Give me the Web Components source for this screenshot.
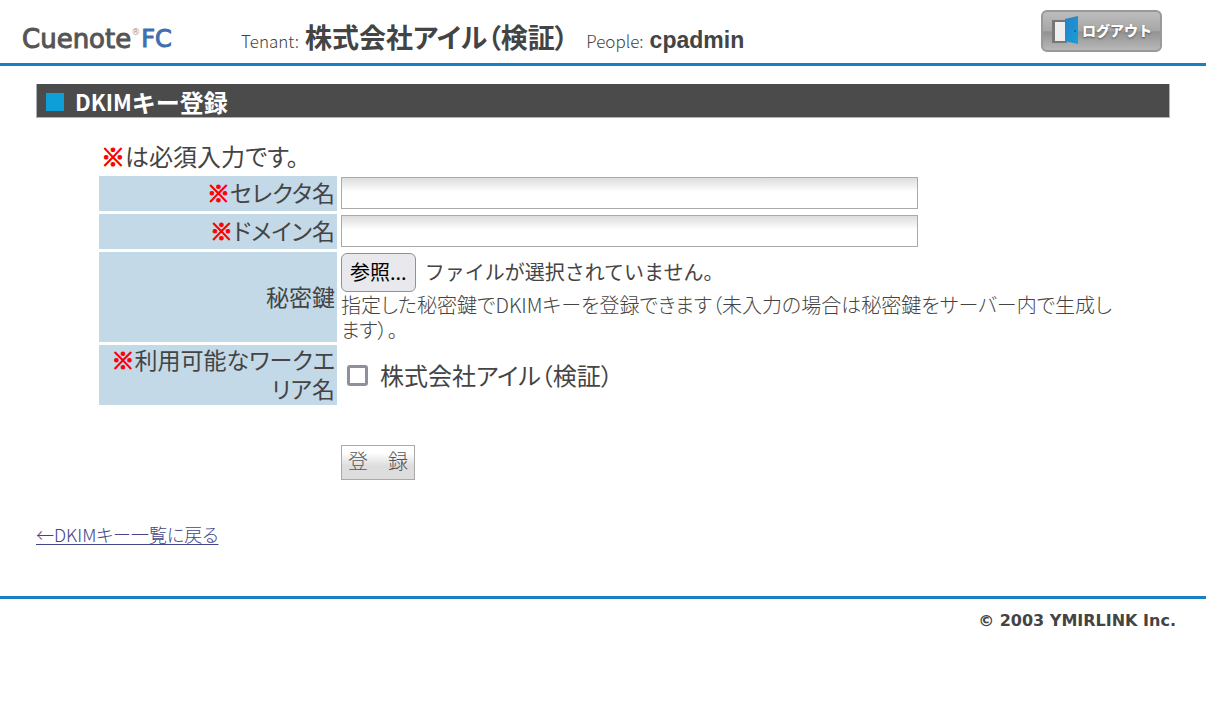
<!DOCTYPE html>
<html lang="ja">
<head>
<meta charset="utf-8">
<meta name="viewport" content="width=device-width, initial-scale=1">
<title>DKIMキー登録 - Cuenote FC</title>
<style>
  :root {
    --line: #1a80c2;
    --fg: #444;
    --label-bg: #c3d9e7;
    --field-border: #aaa;
    --required: #f00;
  }
  body {
    margin: 0;
    background: #fff;
    color: var(--fg);
    font-family: "Noto Sans CJK JP", sans-serif;
  }
</style>
</head>
<body>
<app-header tenant="株式会社アイル（検証）" people="cpadmin">
  <logout-button>ログアウト</logout-button>
</app-header>
<app-page>
  <section-title><span>DKIM</span>キー登録</section-title>
  <dkim-form></dkim-form>
  <back-link href="#list">←DKIMキー一覧に戻る</back-link>
</app-page>
<app-footer>© 2003 YMIRLINK Inc.</app-footer>

<script>
(function () {
  // small helper: attach an open root and fill it
  function render(el, html) {
    el.attachShadow({ mode: 'open' }).innerHTML = html;
  }

  class AppHeader extends HTMLElement {
    connectedCallback() {
      if (this.shadowRoot) return;
      render(this, `
        <style>
          :host { display: block; border-bottom: 3px solid var(--line); }
          header { display: flex; height: 63px; padding: 0 44px 0 22px; box-sizing: border-box; }
          .logo {
            display: flex; width: 219px; padding-top: 21px; line-height: 36px;
            font-family: "DejaVu Sans", sans-serif; font-size: 26px;
            color: #555; text-decoration: none; -webkit-text-stroke: 1px currentColor;
          }
          .logo sup { font-size: 9px; line-height: 22px; color: #999; -webkit-text-stroke: 0; }
          .logo b { margin-left: 1px; font-size: 24px; font-weight: 400; color: #3f6fb0; }
          .who {
            flex: 1; display: flex; align-items: baseline; gap: 6px; padding-top: 18px;
            font-size: 17px; font-weight: 300; line-height: 38px; white-space: nowrap;
            font-feature-settings: "palt";
          }
          .who strong { font-size: 27px; font-weight: 700; }
          .who .people { margin-left: 12px; }
          .who .id { font: 700 23px/38px "Liberation Sans", sans-serif; }
          ::slotted(*) { margin-top: 10px; }
        </style>
        <header>
          <a class="logo" href="#top"><span>Cuenote</span><sup>®</sup><b>FC</b></a>
          <div class="who">
            <span>Tenant:</span><strong class="tenant"></strong>
            <span class="people">People:</span><strong class="id"></strong>
          </div>
          <slot></slot>
        </header>
      `);
      this.shadowRoot.querySelector('.tenant').textContent = this.getAttribute('tenant') || '';
      this.shadowRoot.querySelector('.id').textContent = this.getAttribute('people') || '';
    }
  }

  class LogoutButton extends HTMLElement {
    connectedCallback() {
      if (this.shadowRoot) return;
      render(this, `
        <style>
          :host { display: block; flex: none; }
          button {
            display: flex; align-items: center; gap: 3px;
            width: 121px; height: 42px; padding: 0 0 3px 8px; box-sizing: border-box;
            border: 2px solid #999; border-radius: 6px; cursor: pointer;
            background: linear-gradient(#bdbdbd, #a6a6a6 50%, #929292 52%, #b8b8b8);
            color: #fff; font: 900 14px/20px "Noto Sans CJK JP", sans-serif;
            text-shadow: 0 1px 2px #555;
          }
          svg { flex: none; display: block; }
        </style>
        <button type="button">
          <svg width="28" height="30" viewBox="0 0 28 30" aria-hidden="true">
            <defs>
              <linearGradient id="door" x1="0" y1="0" x2="1" y2="1">
                <stop offset="0" stop-color="#2a7fc4"/><stop offset="1" stop-color="#14a0dc"/>
              </linearGradient>
            </defs>
            <path d="M1 5h15v23H1z" fill="#777"/>
            <path d="M4 7h12v19H4z" fill="#eee"/>
            <path d="M14 4L27 1v28l-13-3z" fill="url(#door)"/>
            <circle cx="24" cy="16" r="1" fill="#0d5f96"/>
          </svg>
          <slot></slot>
        </button>
      `);
    }
  }

  class AppPage extends HTMLElement {
    connectedCallback() {
      if (this.shadowRoot) return;
      render(this, `
        <style>
          :host { display: block; padding: 18px 36px 50px; }
        </style>
        <main><slot></slot></main>
      `);
    }
  }

  class SectionTitle extends HTMLElement {
    connectedCallback() {
      if (this.shadowRoot) return;
      render(this, `
        <style>
          :host { display: block; }
          h1 {
            display: flex; align-items: center; margin: 0; padding: 2px 9px 0; height: 34px;
            box-sizing: border-box; border: solid #b0b0bc; border-width: 0 1px 1px;
            background: #4b4b4b; color: #fff; font-size: 24px; font-weight: 700; line-height: 31px;
          }
          h1::before { content: ""; width: 18px; height: 18px; margin-right: 11px; background: #0e9fd8; }
          ::slotted(span) { font-size: 22px; }
        </style>
        <h1><slot></slot></h1>
      `);
    }
  }

  // label cell on the left, field on the right
  class FormRow extends HTMLElement {
    connectedCallback() {
      if (this.shadowRoot) return;
      render(this, `
        <style>
          :host { display: grid; grid-template-columns: 238px 1fr; column-gap: 4px; min-height: 35px; }
          .label {
            display: flex; align-items: center; justify-content: flex-end;
            padding: 0 2px 2px; background: var(--label-bg);
            font-size: 23px; line-height: 29px; text-align: right;
          }
          .field { align-self: center; min-width: 0; }
        </style>
        <div class="label"><slot name="label"></slot></div>
        <div class="field"><slot></slot></div>
      `);
    }
  }

  class FilePicker extends HTMLElement {
    connectedCallback() {
      if (this.shadowRoot) return;
      render(this, `
        <style>
          :host { display: flex; align-items: center; gap: 9px; padding-top: 1px; font-size: 20px; line-height: 30px; }
          button {
            height: 39px; padding: 0 8px 2px; border: 1px solid #8f8f9d; border-radius: 6px;
            background: #e9e9ed; color: #000; font: inherit;
          }
          span { padding-bottom: 2px; }
          input { display: none; }
        </style>
        <button type="button">参照...</button>
        <span>ファイルが選択されていません。</span>
        <input type="file" aria-label="秘密鍵">
      `);
      const input = this.shadowRoot.querySelector('input');
      const name = this.shadowRoot.querySelector('span');
      this.shadowRoot.querySelector('button').addEventListener('click', () => input.click());
      input.addEventListener('change', () => {
        if (input.files.length) name.textContent = input.files[0].name;
      });
    }
  }

  class DkimForm extends HTMLElement {
    connectedCallback() {
      if (this.shadowRoot) return;
      render(this, `
        <style>
          :host { display: block; padding: 23px 54px 0 63px; }
          .note { margin: 0; padding: 0 2px 5px; font-size: 24px; line-height: 30px; font-feature-settings: "palt"; }
          .rows { display: grid; gap: 3px; }
          label, [slot="label"] { font-feature-settings: "palt"; }
          em { color: var(--required); font-style: normal; font-weight: 700; -webkit-text-stroke: 1px var(--required); }
          input[type="text"] {
            display: block; width: 577px; max-width: 100%; height: 32px; box-sizing: border-box;
            margin: 0 0 1px; border: 1px solid var(--field-border); padding: 0 4px; font-size: 20px;
            background: linear-gradient(#ddd, #fff 14px);
          }
          .help {
            margin: 0; font-size: 20px; font-weight: 300; line-height: 25px;
            font-feature-settings: "palt";
          }
          .check { display: flex; align-items: center; gap: 12px; padding-left: 6px; font-size: 24px; line-height: 30px; }
          input[type="checkbox"] {
            appearance: none; flex: none; width: 21px; height: 21px; margin: 0;
            border: 3px solid #8f8f9d; border-radius: 3px; background: #fff;
          }
          input[type="checkbox"]:checked { background: var(--line); }
          .submit {
            display: block; margin: 40px 0 0 242px; height: 35px; padding: 0 6px 4px;
            border: 1px solid var(--field-border); background: linear-gradient(#fff 20%, #ddd 60%);
            color: #555; font: 300 20px/30px "Noto Sans CJK JP", sans-serif;
          }
        </style>
        <form>
          <p class="note"><em>※</em>は必須入力です。</p>
          <div class="rows">
            <form-row>
              <label slot="label" for="selector"><em>※</em>セレクタ名</label>
              <input type="text" id="selector" name="selector">
            </form-row>
            <form-row>
              <label slot="label" for="domain"><em>※</em>ドメイン名</label>
              <input type="text" id="domain" name="domain">
            </form-row>
            <form-row>
              <span slot="label">秘密鍵</span>
              <file-picker></file-picker>
              <p class="help">指定した秘密鍵でDKIMキーを登録できます（未入力の場合は秘密鍵をサーバー内で生成します）。</p>
            </form-row>
            <form-row>
              <span slot="label"><em>※</em>利用可能なワークエリア名</span>
              <label class="check"><input type="checkbox" name="workarea">株式会社アイル（検証）</label>
            </form-row>
          </div>
          <button class="submit" type="button">登　録</button>
        </form>
      `);
    }
  }

  class BackLink extends HTMLElement {
    connectedCallback() {
      if (this.shadowRoot) return;
      render(this, `
        <style>
          :host { display: block; margin-top: 42px; font-size: 18px; font-weight: 300; line-height: 24px; }
          a { color: #448; font-feature-settings: "palt"; text-underline-offset: 2px; }
        </style>
        <a><slot></slot></a>
      `);
      this.shadowRoot.querySelector('a').href = this.getAttribute('href') || '#';
    }
  }

  class AppFooter extends HTMLElement {
    connectedCallback() {
      if (this.shadowRoot) return;
      render(this, `
        <style>
          :host { display: block; border-top: 3px solid var(--line); }
          footer {
            padding: 12px 30px; text-align: right;
            font: 700 16px/20px "DejaVu Sans", sans-serif;
          }
        </style>
        <footer><slot></slot></footer>
      `);
    }
  }

  customElements.define('app-header', AppHeader);
  customElements.define('logout-button', LogoutButton);
  customElements.define('app-page', AppPage);
  customElements.define('section-title', SectionTitle);
  customElements.define('form-row', FormRow);
  customElements.define('file-picker', FilePicker);
  customElements.define('dkim-form', DkimForm);
  customElements.define('back-link', BackLink);
  customElements.define('app-footer', AppFooter);
})();
</script>
</body>
</html>
